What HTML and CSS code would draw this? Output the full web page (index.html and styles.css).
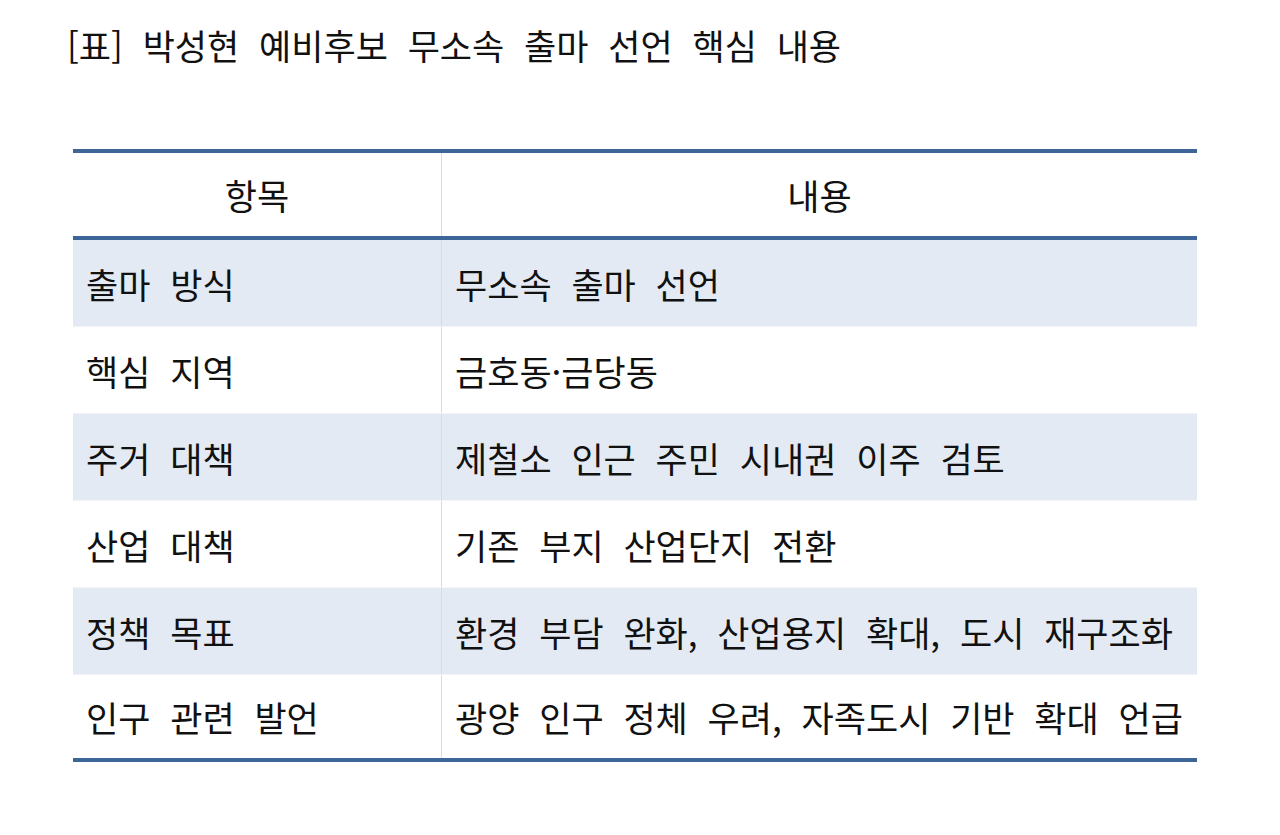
FILE: index.html
```html
<!DOCTYPE html>
<html lang="ko">
<head>
<meta charset="utf-8">
<link rel="stylesheet" href="styles.css">
</head>
<body>
<div class="page">
  <h1 class="title">[표] 박성현 예비후보 무소속 출마 선언 핵심 내용</h1>
  <table class="tbl">
    <thead>
      <tr><th class="c1">항목</th><th class="c2">내용</th></tr>
    </thead>
    <tbody>
      <tr class="alt"><td>출마 방식</td><td>무소속 출마 선언</td></tr>
      <tr><td>핵심 지역</td><td>금호동·금당동</td></tr>
      <tr class="alt"><td>주거 대책</td><td>제철소 인근 주민 시내권 이주 검토</td></tr>
      <tr><td>산업 대책</td><td>기존 부지 산업단지 전환</td></tr>
      <tr class="alt"><td>정책 목표</td><td>환경 부담 완화, 산업용지 확대, 도시 재구조화</td></tr>
      <tr><td>인구 관련 발언</td><td>광양 인구 정체 우려, 자족도시 기반 확대 언급</td></tr>
    </tbody>
  </table>
</div>
</body>
</html>
```
FILE: styles.css
```css
html, body {
  margin: 0;
  padding: 0;
  background: #ffffff;
}
.page {
  font-family: "Noto Sans CJK KR", "Noto Sans", sans-serif;
  color: #111111;
  padding: 22px 0 0 67px;
  width: 1130px;
}
.title {
  margin: 0;
  font-size: 35px;
  font-weight: 400;
  line-height: 46px;
  word-spacing: 10px;
  letter-spacing: 0;
}
.tbl {
  margin: 81px 0 0 6px;
  width: 1124px;
  border-collapse: collapse;
  font-size: 35px;
  word-spacing: 10px;
}
.tbl thead tr {
  border-top: 4px solid #3e6597;
  border-bottom: 4px solid #3e6597;
}
.tbl th {
  font-weight: 400;
  height: 83px;
  text-align: center;
  padding: 0;
}
.tbl th.c1 { width: 368px; }
.tbl td {
  height: 86px;
  padding: 0 0 0 13px;
  text-align: left;
  border-bottom: 1px solid #f0f3f7;
}
.tbl th + th,
.tbl td + td {
  border-left: 1px solid #d6dce5;
}
.tbl tr.alt td {
  background: #e4eaf3;
}
.tbl tbody tr:last-child td {
  border-bottom: 4px solid #3e6597;
  height: 83px;
}
```
